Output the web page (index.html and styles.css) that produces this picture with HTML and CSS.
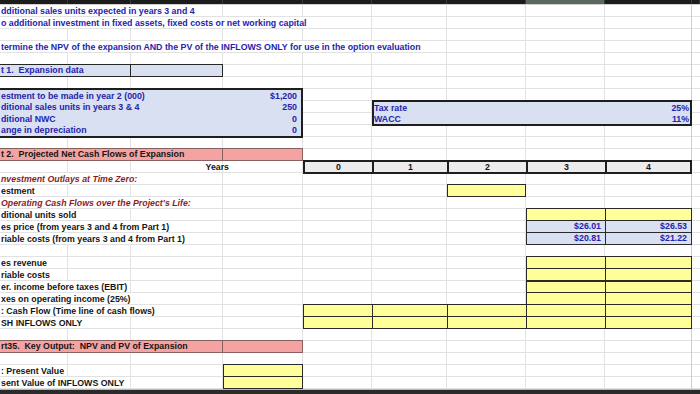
FILE: index.html
```html
<!DOCTYPE html>
<html>
<head>
<meta charset="utf-8">
<link rel="stylesheet" href="styles.css">
</head>
<body>
<div class="colhdr">
  <div></div><div></div><div></div><div></div><div></div><div></div><div></div><div class="sel"></div><div></div><div></div>
</div>
<div class="sheet">
  <div class="vl c1"></div><div class="vl c2"></div><div class="vl c3"></div><div class="vl c4"></div><div class="vl c5"></div>
  <div class="vl c6"></div><div class="vl c7"></div><div class="vl c8"></div><div class="vl c9 edge"></div>

  <div class="tx blue r1">dditional sales units expected in years 3 and 4</div>
  <div class="tx blue r2">o additional investment in fixed assets, fixed costs or net working capital</div>
  <div class="tx blue r4">termine the NPV of the expansion AND the PV of the INFLOWS ONLY for use in the option evaluation</div>

  <div class="p1a">t 1.&nbsp; Expansion data</div>
  <div class="p1b"></div>

  <div class="exp">
    <div class="erow"><span>estment to be made in year 2 (000)</span><span>$1,200</span></div>
    <div class="erow"><span>ditional sales units in years 3 &amp; 4</span><span>250</span></div>
    <div class="erow"><span>ditional NWC</span><span>0</span></div>
    <div class="erow"><span>ange in depreciation</span><span>0</span></div>
  </div>

  <div class="tax">
    <div class="erow"><span>Tax rate</span><span>25%</span></div>
    <div class="erow"><span>WACC</span><span>11%</span></div>
  </div>

  <div class="pk pk1">t 2.&nbsp; Projected Net Cash Flows of Expansion</div>
  <div class="pk pk2"></div>

  <div class="years">Years</div>
  <div class="yrs">
    <div>0</div><div>1</div><div>2</div><div>3</div><div>4</div>
  </div>

  <div class="tx red r15">nvestment Outlays at Time Zero:</div>
  <div class="tx r16">estment</div>
  <div class="ycell inv"></div>
  <div class="tx red r17">Operating Cash Flows over the Project's Life:</div>
  <div class="tx r18">ditional units sold</div>
  <div class="tx r19">es price (from years 3 and 4 from Part 1)</div>
  <div class="tx r20">riable costs (from years 3 and 4 from Part 1)</div>

  <div class="blk blkA">
    <div class="y"></div><div class="y"></div>
    <div class="b">$26.01</div><div class="b">$26.53</div>
    <div class="b">$20.81</div><div class="b">$21.22</div>
  </div>

  <div class="tx r22">es revenue</div>
  <div class="tx r23">riable costs</div>
  <div class="tx r24">er. income before taxes (EBIT)</div>
  <div class="tx r25">xes on operating income (25%)</div>
  <div class="blk blkB">
    <div class="y"></div><div class="y"></div>
    <div class="y"></div><div class="y"></div>
    <div class="y thick"></div><div class="y thick"></div>
    <div class="y"></div><div class="y"></div>
  </div>

  <div class="tx r26">: Cash Flow (Time line of cash flows)</div>
  <div class="tx r27">SH INFLOWS ONLY</div>
  <div class="blk blkC">
    <div class="y"></div><div class="y"></div><div class="y"></div><div class="y"></div><div class="y"></div>
    <div class="y"></div><div class="y"></div><div class="y"></div><div class="y"></div><div class="y"></div>
  </div>

  <div class="pk pk3">rt35.&nbsp; Key Output:&nbsp; NPV and PV of Expansion</div>
  <div class="pk pk4"></div>

  <div class="tx r31">: Present Value</div>
  <div class="tx r32">sent Value of INFLOWS ONLY</div>
  <div class="blk blkE">
    <div class="y"></div>
    <div class="y"></div>
  </div>
</div>
<div class="foot"></div>
</body>
</html>
```
FILE: styles.css
```css
* { box-sizing: border-box; margin: 0; padding: 0; }
html, body { width: 700px; height: 394px; overflow: hidden; background: #fff; }
body {
  font-family: "Liberation Sans", Arial, sans-serif;
  font-weight: bold;
  font-size: 8.8px;
  color: #151515;
}

.colhdr {
  display: grid;
  grid-template-columns: 68px 63px 92px 80px 69px 75px 79px 79px 87px 8px;
  height: 5px;
  background: #1c1c1c;
  border-bottom: 1px solid #d0d0d0;
}
.colhdr div { border-right: 1px solid #383838; }
.colhdr .sel { background: #5a685e; }

.sheet {
  display: grid;
  grid-template-columns: 68px 63px 92px 80px 69px 75px 79px 79px 87px 8px;
  grid-template-rows: repeat(32, 12px);
  background-image: linear-gradient(to bottom, transparent 11px, #e2e2e2 11px);
  background-size: 100% 12px;
}

.vl { grid-row: 1 / -1; border-right: 1px solid #e2e2e2; }
.vl.edge { border-right-color: #cdcdcd; }
.c1 { grid-column: 1; } .c2 { grid-column: 2; } .c3 { grid-column: 3; }
.c4 { grid-column: 4; } .c5 { grid-column: 5; } .c6 { grid-column: 6; }
.c7 { grid-column: 7; } .c8 { grid-column: 8; } .c9 { grid-column: 9; }

.tx {
  grid-column: 1 / -1;
  justify-self: start;
  align-self: start;
  height: 11px;
  line-height: 12px;
  background: #fff;
  white-space: nowrap;
  padding: 0 1px 0 1px;
}
.blue { color: #2424ac; }
.red { color: #8c1d1d; font-style: italic; }

.r1 { grid-row: 1; } .r2 { grid-row: 2; } .r4 { grid-row: 4; }
.r15 { grid-row: 15; } .r16 { grid-row: 16; } .r17 { grid-row: 17; }
.r18 { grid-row: 18; } .r19 { grid-row: 19; } .r20 { grid-row: 20; }
.r22 { grid-row: 22; } .r23 { grid-row: 23; } .r24 { grid-row: 24; }
.r25 { grid-row: 25; } .r26 { grid-row: 26; } .r27 { grid-row: 27; }
.r31 { grid-row: 31; } .r32 { grid-row: 32; }

.p1a, .p1b {
  background: #d9e0f2;
  border: 1px solid #262626;
  border-left: 0;
  color: #2424ac;
  line-height: 11px;
  padding-left: 1px;
  white-space: nowrap;
}
.p1a { grid-area: 6 / 1 / 7 / 3; margin-top: -1px; }
.p1b { grid-area: 6 / 3 / 7 / 4; margin-top: -1px; }

.exp, .tax {
  background: #d9e0f2;
  border: 2px solid #1e1e1e;
  color: #2424ac;
  display: grid;
  margin: -1px 0;
}
.exp { grid-area: 8 / 1 / 12 / 5; border-left: 0; grid-template-rows: repeat(4, 1fr); }
.tax { grid-area: 9 / 6 / 11 / 10; grid-template-rows: repeat(2, 1fr); }
.erow {
  display: flex;
  justify-content: space-between;
  align-items: center;
  white-space: nowrap;
  padding: 0 4px 0 1px;
}
.tax .erow { padding: 0 1px 0 0; }

.pk {
  background: #f4a3a3;
  border: 1px solid #8a5f5f;
  border-left: 0;
  line-height: 10px;
  padding-left: 1px;
  white-space: nowrap;
  margin-top: -1px;
}
.pk1 { grid-area: 13 / 1 / 14 / 4; }
.pk2 { grid-area: 13 / 4 / 14 / 5; }
.pk3 { grid-area: 29 / 1 / 30 / 4; }
.pk4 { grid-area: 29 / 4 / 30 / 5; }

.years {
  grid-area: 14 / 1 / 15 / 5;
  justify-self: end;
  margin-right: 74px;
  line-height: 12px;
}
.yrs {
  grid-area: 14 / 5 / 15 / 10;
  margin: -1px 0;
  background: #1e1e1e;
  padding: 2px;
  display: grid;
  grid-template-columns: 67px 73px 77px 77px 1fr;
  gap: 2px;
}
.yrs div { background: #ececec; text-align: center; line-height: 10px; }

.ycell { background: #ffff99; border: 1px solid #2a2a2a; margin-top: -1px; }
.inv { grid-area: 16 / 7 / 17 / 8; }

.blk {
  display: grid;
  background: #2a2a2a;
  padding: 1px;
  gap: 1px;
  margin-top: -1px;
}
.y { background: #ffff99; }
.y.thick { border-top: 1px solid #2a2a2a; }
.b {
  background: #d9e0f2;
  color: #2424ac;
  text-align: right;
  padding-right: 4px;
  line-height: 11px;
}
.blkA { grid-area: 18 / 8 / 21 / 10; grid-template-columns: 78px 1fr; grid-template-rows: repeat(3, 1fr); }
.blkB { grid-area: 22 / 8 / 26 / 10; grid-template-columns: 78px 1fr; grid-template-rows: repeat(4, 1fr); }
.blkC { grid-area: 26 / 5 / 28 / 10; grid-template-columns: 68px 74px 78px 78px 1fr; grid-template-rows: repeat(2, 1fr); }
.blkE { grid-area: 31 / 4 / 33 / 5; grid-template-rows: repeat(2, 1fr); }

.foot {
  height: 5px;
  background: linear-gradient(to bottom, #b8b8b8 0 1px, #2a2a2a 1px);
}
```
